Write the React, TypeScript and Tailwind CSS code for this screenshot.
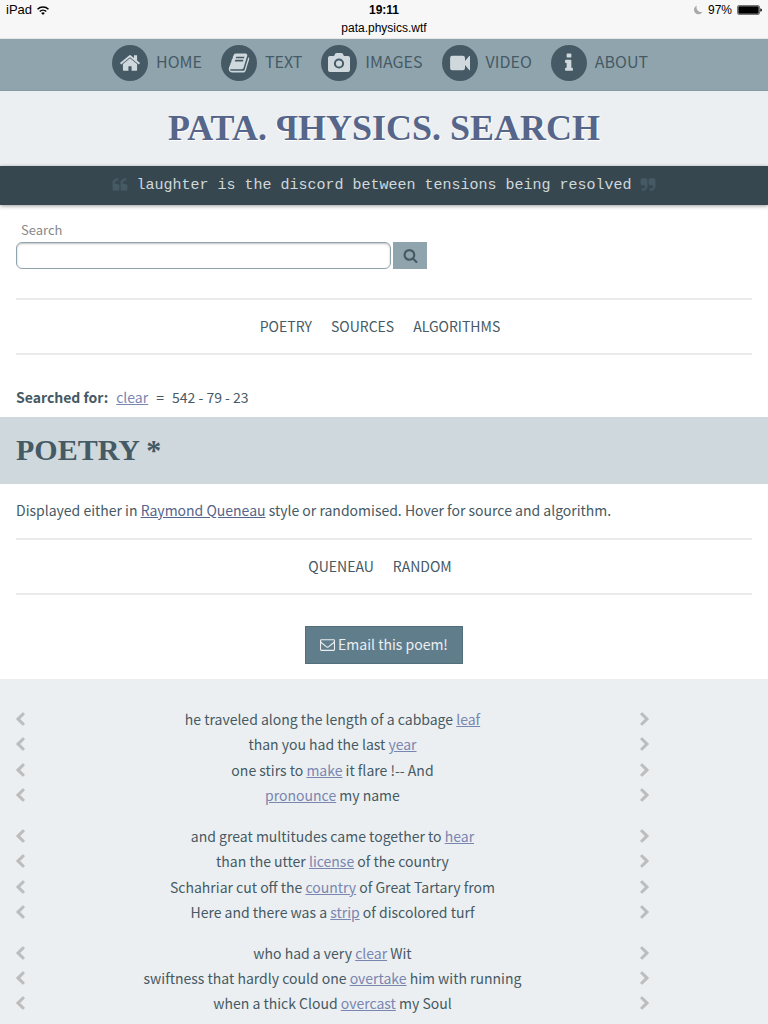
import React from "react";

type GlyphProps = { d: string; box?: string; className?: string };

function Glyph({ d, box = "0 0 1792 1792", className = "" }: GlyphProps) {
  return (
    <svg viewBox={box} fill="currentColor" fillRule="evenodd" aria-hidden="true" className={`block shrink-0 ${className}`}>
      <path d={d} />
    </svg>
  );
}

const HOME =
  "M1472 992v480q0 26-19 45t-45 19h-384v-384h-256v384h-384q-26 0-45-19t-19-45v-480q0-1 .5-3t.5-3l575-474 575 474q1 2 1 6zm223-69l-62 74q-8 9-21 11h-3q-13 0-21-7l-692-577-692 577q-12 8-24 7-13-2-21-11l-62-74q-8-10-7-23.5t11-21.5l719-599q32-26 76-26t76 26l244 204v-195q0-14 9-23t23-9h192q14 0 23 9t9 23v408l219 182q10 8 11 21.5t-7 23.5z";
const BOOK =
  "M1703 478q40 57 18 129l-275 906q-19 64-76.5 107.5t-122.5 43.5h-923q-77 0-148.5-53.5t-99.5-131.5q-24-67-2-127 0-4 3-27t4-37q1-8-3-21.5t-3-19.5q2-11 8-21t16.5-23.5 16.5-23.5q23-38 45-91.5t30-91.5q3-10 .5-30t-.5-28q3-11 17-28t17-23q21-36 42-92t25-90q1-9-2.5-32t.5-28q4-13 22-30.5t22-22.5q19-26 42.5-84.5t27.5-96.5q1-8-3-25.5t-2-26.5q2-8 9-18t18-23 17-21q8-12 16.5-30.5t15-35 16-36 19.5-32 26.5-23.5 36-11.5 47.5 5.5l-1 3q38-9 51-9h761q74 0 114 56t18 130l-274 906q-36 119-71.5 153.5t-128.5 34.5h-869q-27 0-38 15-11 16-1 43 24 70 144 70h923q29 0 56-15.5t35-41.5l300-987q7-22 5-57 38 15 59 43zm-1064 2q-4 13 2 22.5t20 9.5h608q13 0 25.5-9.5t16.5-22.5l21-64q4-13-2-22.5t-20-9.5h-608q-13 0-25.5 9.5t-16.5 22.5zm-83 256q-4 13 2 22.5t20 9.5h608q13 0 25.5-9.5t16.5-22.5l21-64q4-13-2-22.5t-20-9.5h-608q-13 0-25.5 9.5t-16.5 22.5z";
const CAMERA =
  "M2 4h4l1.2-2.2q.4-.8 1.3-.8h5q.9 0 1.3.8L16 4h4q2 0 2 2v12q0 2-2 2H2q-2 0-2-2V6q0-2 2-2zM11 6.4a5.1 5.1 0 1 0 0 10.2a5.1 5.1 0 1 0 0-10.2zM11 8.4a3.1 3.1 0 1 1 0 6.2a3.1 3.1 0 1 1 0-6.2z";
const VIDEO =
  "M3.3 3.7h10.500q2.200 0 2.200 2.200v3l4-4.600q.4-.5 1-.5v14.400q-.6 0-1-.5l-4-4.600v3q0 2.200-2.200 2.200h-10.500q-2.200 0-2.200-2.200V5.900q0-2.200 2.200-2.200z";
const INFO =
  "M1216 1344v128q0 26-19 45t-45 19h-512q-26 0-45-19t-19-45v-128q0-26 19-45t45-19h64v-384h-64q-26 0-45-19t-19-45v-128q0-26 19-45t45-19h384q26 0 45 19t19 45v576h64q26 0 45 19t19 45zm-128-1152v192q0 26-19 45t-45 19h-256q-26 0-45-19t-19-45v-192q0-26 19-45t45-19h256q26 0 45 19t19 45z";
const QUOTE =
  "M832 960v384q0 80-56 136t-136 56h-384q-80 0-136-56t-56-136v-704q0-104 40.5-198.5t109.5-163.5 163.5-109.5 198.5-40.5h64q26 0 45 19t19 45v128q0 26-19 45t-45 19h-64q-106 0-181 75t-75 181v32q0 40 28 68t68 28h224q80 0 136 56t56 136zm896 0v384q0 80-56 136t-136 56h-384q-80 0-136-56t-56-136v-704q0-104 40.5-198.5t109.5-163.5 163.5-109.5 198.5-40.5h64q26 0 45 19t19 45v128q0 26-19 45t-45 19h-64q-106 0-181 75t-75 181v32q0 40 28 68t68 28h224q80 0 136 56t56 136z";
const SEARCH =
  "M1216 832q0-185-131.5-316.5t-316.5-131.5-316.5 131.5-131.5 316.5 131.5 316.5 316.5 131.5 316.5-131.5 131.5-316.5zm512 832q0 52-38 90t-90 38q-54 0-90-38l-343-342q-179 124-399 124-143 0-273.5-55.5t-225-150-150-225-55.5-273.5 55.5-273.5 150-225 225-150 273.5-55.5 273.5 55.5 225 150 150 225 55.5 273.5q0 220-124 399l343 343q37 37 37 90z";
const ENVELOPE =
  "M1664 1504v-768q-32 36-69 66-268 206-426 338-51 43-83 67t-86.5 48.5-102.5 24.5h-2q-48 0-102.5-24.5t-86.5-48.5-83-67q-158-132-426-338-37-30-69-66v768q0 13 9.5 22.5t22.5 9.5h1472q13 0 22.5-9.5t9.5-22.5zm0-1051v-24.5l-.5-13-3-12.5-5.5-9-9-7.5-14-2.5h-1472q-13 0-22.5 9.5t-9.5 22.5q0 168 147 284 193 152 401 317 6 5 35 29.5t46 37.5 44.5 31.5 50.5 27.5 43 9h2q20 0 43-9t50.5-27.5 44.5-31.5 46-37.5 35-29.5q208-165 401-317 54-43 100.5-115.5t46.5-131.5zm128-37v1088q0 66-47 113t-113 47h-1472q-66 0-113-47t-47-113v-1088q0-66 47-113t113-47h1472q66 0 113 47t47 113z";
const CHEVRON =
  "M1427 301l-531 531 531 531q19 19 19 45t-19 45l-166 166q-19 19-45 19t-45-19l-742-742q-19-19-19-45t19-45l742-742q19-19 45-19t45 19l166 166q19 19 19 45t-19 45z";

const NAV = [
  { label: "HOME", d: HOME, box: "0 0 1792 1792" },
  { label: "TEXT", d: BOOK, box: "0 0 1792 1792" },
  { label: "IMAGES", d: CAMERA, box: "0 0 22 22" },
  { label: "VIDEO", d: VIDEO, box: "0 0 22 22" },
  { label: "ABOUT", d: INFO, box: "0 0 1792 1792" },
];

// Each verse is [text before, linked word, text after].
type Verse = [string, string, string];

const STANZAS: Verse[][] = [
  [
    ["he traveled along the length of a cabbage ", "leaf", ""],
    ["than you had the last ", "year", ""],
    ["one stirs to ", "make", " it flare !-- And"],
    ["", "pronounce", " my name"],
  ],
  [
    ["and great multitudes came together to ", "hear", ""],
    ["than the utter ", "license", " of the country"],
    ["Schahriar cut off the ", "country", " of Great Tartary from"],
    ["Here and there was a ", "strip", " of discolored turf"],
  ],
  [
    ["who had a very ", "clear", " Wit"],
    ["swiftness that hardly could one ", "overtake", " him with running"],
    ["when a thick Cloud ", "overcast", " my Soul"],
  ],
];

function StatusBar() {
  return (
    <div className="h-[39px] border-b border-[#e4e6e8] bg-[#f7f7f7] px-[6px] font-['Liberation_Sans',sans-serif] text-black">
      <div className="grid h-[20px] grid-cols-3 items-center text-[13px] leading-[20px]">
        <div className="flex items-center gap-[5px]">
          <span>iPad</span>
          <svg viewBox="0 0 24 18" className="h-[9px] w-[12px]" fill="none" stroke="black" strokeWidth="3" aria-hidden="true">
            <path d="M1 6.5a15.5 15.5 0 0 1 22 0" />
            <path d="M5.5 11a9.2 9.2 0 0 1 13 0" />
            <path d="M12 18l-3.6-3.8a5.2 5.2 0 0 1 7.2 0z" fill="black" stroke="none" />
          </svg>
        </div>
        <span className="text-center text-[12px] font-bold">19:11</span>
        <div className="flex items-center justify-end gap-[5px]">
          <svg viewBox="0 0 20 20" className="h-[10px] w-[10px]" fill="#a9a9ab" aria-hidden="true">
            <path d="M8 1a9 9 0 1 0 11 12.5A9 9 0 0 1 8 1z" />
          </svg>
          <span className="text-[12px]">97%</span>
          <svg viewBox="0 0 25 10" className="h-[10px] w-[25px]" aria-hidden="true">
            <rect x="0.5" y="0.5" width="22" height="9" rx="1.5" fill="none" stroke="#777" />
            <rect x="1.3" y="1.3" width="20.4" height="7.4" rx="0.8" fill="black" />
            <path d="M23.3 3.2q1.7.4 1.7 1.8t-1.7 1.8z" fill="black" />
          </svg>
        </div>
      </div>
      <p className="text-center text-[12px] leading-[16px]">pata.physics.wtf</p>
    </div>
  );
}

function SubMenu({ items }: { items: string[] }) {
  return (
    <nav className="mx-4 flex h-[57px] items-start justify-center gap-[19px] border-y-2 border-[#ebebeb] pt-[14px] pr-2">
      {items.map((item) => (
        <a key={item} href="#">
          {item}
        </a>
      ))}
    </nav>
  );
}

export default function App() {
  return (
    <div className="flex min-h-screen flex-col bg-white font-['Noto_Sans_CJK_SC',sans-serif] text-[14px] leading-[24px] text-[#455a64]">
      <StatusBar />
      <nav className="flex h-[52px] items-start justify-center gap-[19px] border-b border-[#839aa4] bg-[#90a4ae] pt-[6px] pr-[8px]">
        {NAV.map((n) => (
          <a key={n.label} href="#" className="flex items-start gap-[8px]">
            <span className="flex size-[36px] items-center justify-center rounded-full bg-[#455a64] text-[#cfd8dc]">
              <Glyph d={n.d} box={n.box} className="size-[22px]" />
            </span>
            <span className="text-[16px] leading-[32px]">{n.label}</span>
          </a>
        ))}
      </nav>

      <header className="bg-[#eceff1]">
        <h1 className="h-[75px] text-center font-['Liberation_Serif',serif] text-[36px] leading-[75px] font-bold text-[#56658a] [text-shadow:1px_1px_0_white]">
          PATA. <span className="inline-block -scale-x-100">P</span>HYSICS. SEARCH
        </h1>
        <div className="flex h-[39px] items-center justify-center gap-[8px] bg-[#37474f] text-[#455a64] shadow-[0_1px_4px_rgba(0,0,0,0.4)]">
          <Glyph d={QUOTE} box="0 96 1792 1792" className="size-[16px]" />
          <p className="font-['Liberation_Mono',monospace] text-[15px] text-[#cfd8dc]">
            laughter is the discord between tensions being resolved
          </p>
          <Glyph d={QUOTE} box="0 -224 1792 1792" className="size-[16px] rotate-180" />
        </div>
      </header>

      <form className="px-4 pt-[13px] pb-[29px]" onSubmit={(e) => e.preventDefault()}>
        <label htmlFor="query" className="block px-[5px] text-[13px] text-[#888888]">
          Search
        </label>
        <div className="flex gap-[2px]">
          <input
            id="query"
            type="text"
            className="h-[27px] w-[375px] rounded-[6px] border border-[#90a4ae] bg-white px-2 shadow-[inset_0_1px_2px_rgba(0,0,0,0.25)]"
          />
          <button type="submit" aria-label="Search" className="flex h-[27px] w-[34px] items-center justify-center bg-[#90a4ae]">
            <Glyph d={SEARCH} className="size-[15px]" />
          </button>
        </div>
      </form>

      <SubMenu items={["POETRY", "SOURCES", "ALGORITHMS"]} />

      <p className="flex gap-[8px] px-4 pt-[30px] pb-[8px]">
        <strong>Searched for:</strong>
        <a href="#" className="text-[#7986b0] underline">
          clear
        </a>
        <span>=</span>
        <span>542 - 79 - 23</span>
      </p>

      <h2 className="h-[67px] bg-[#cfd8dc] px-4 font-['Liberation_Serif',serif] text-[30px] leading-[65px] font-bold">POETRY *</h2>

      <p className="px-4 pt-[14px] pb-[16px]">
        Displayed either in{" "}
        <a href="#" className="text-[#56658a] underline">
          Raymond Queneau
        </a>{" "}
        style or randomised. Hover for source and algorithm.
      </p>

      <SubMenu items={["QUENEAU", "RANDOM"]} />

      <div className="flex justify-center pt-[31px] pb-[15px]">
        <button type="button" className="flex h-[38px] items-center gap-[3px] border border-[#546e7a] bg-[#607d8b] px-[14px] pb-[2px] text-[#eceff1]">
          <Glyph d={ENVELOPE} className="size-[15px]" />
          Email this poem!
        </button>
      </div>

      <main className="flex-1 bg-[#eceff1] px-4 pt-[27px]">
        <div className="flex w-[86%] flex-col gap-[15px]">
          {STANZAS.map((stanza, s) => (
            <div key={s} className={stanza.length === 4 ? "grid h-[102px] grid-rows-4" : "grid h-[76px] grid-rows-3"}>
              {stanza.map(([before, word, after]) => (
                <div key={word} className="flex items-center">
                  <button type="button" aria-label="Previous line" className="text-[#bdbdbd]">
                    <Glyph d={CHEVRON} box="410 0 1040 1664" className="h-[14px] w-[9px]" />
                  </button>
                  <p className="flex-1 text-center">
                    {before}
                    <a href="#" className="text-[#7986b0] underline">
                      {word}
                    </a>
                    {after}
                  </p>
                  <button type="button" aria-label="Next line" className="text-[#bdbdbd]">
                    <Glyph d={CHEVRON} box="410 0 1040 1664" className="h-[14px] w-[9px] rotate-180" />
                  </button>
                </div>
              ))}
            </div>
          ))}
        </div>
      </main>
    </div>
  );
}
